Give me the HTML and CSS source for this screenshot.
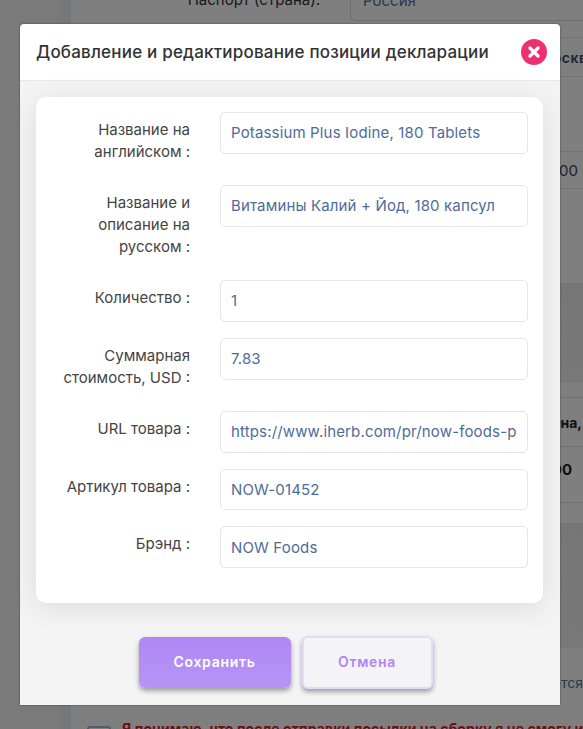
FILE: index.html
```html
<!DOCTYPE html>
<html lang="en">
<head>
    <meta charset="UTF-8">
    <meta name="viewport" content="width=device-width, initial-scale=1.0">
    <title>Позиция декларации</title>
    <link rel="stylesheet" href="styles.css">
</head>
<body>

    <div class="page">
        <div class="sidebar"></div>
        <div class="content">
            <div class="passport-row">
                <span class="passport-label">Паспорт (страна):</span>
                <span class="passport-value">Россия</span>
            </div>
            <div class="line-row city-row"><span class="city">Москва</span></div>
            <div class="blank-row"></div>
            <div class="line-row sum-row"><span class="sum">100</span></div>
            <div class="blank-row short"></div>
            <div class="band"></div>
            <div class="table-gap"></div>
            <div class="line-row head-row"><span class="head">Цена,</span></div>
            <div class="line-row price-row"><span class="price">100</span></div>
            <div class="table-gap low"></div>
            <div class="band tall"></div>
            <div class="note-row"><span class="note">оплачивается</span></div>
            <div class="agree-row">
                <span class="checkbox"></span>
                <span class="agree">Я понимаю, что после отправки посылки на сборку я не смогу изменить</span>
            </div>
        </div>
    </div>

    <div class="overlay"></div>

    <div class="modal">
        <div class="modal-header">
            <h4 class="modal-title">Добавление и редактирование позиции декларации</h4>
            <button class="close-button" aria-label="Закрыть">
                <svg width="12" height="12" viewBox="0 0 12 12"><path d="M2 2 L10 10 M10 2 L2 10" stroke="#fff" stroke-width="3.2" stroke-linecap="round"/></svg>
            </button>
        </div>
        <div class="modal-body">
            <form class="card">
                <div class="field">
                    <label class="field-label">Название на английском :</label>
                    <input class="field-input" type="text" value="Potassium Plus Iodine, 180 Tablets">
                </div>
                <div class="field">
                    <label class="field-label">Название и<br>описание на<br>русском :</label>
                    <input class="field-input" type="text" value="Витамины Калий + Йод, 180 капсул">
                </div>
                <div class="field">
                    <label class="field-label">Количество :</label>
                    <input class="field-input" type="text" value="1">
                </div>
                <div class="field">
                    <label class="field-label">Суммарная<br>стоимость, USD :</label>
                    <input class="field-input" type="text" value="7.83">
                </div>
                <div class="field">
                    <label class="field-label">URL товара :</label>
                    <input class="field-input" type="text" value="https://www.iherb.com/pr/now-foods-potassium-plus-iodine-180-tablets/1452">
                </div>
                <div class="field">
                    <label class="field-label">Артикул товара :</label>
                    <input class="field-input" type="text" value="NOW-01452">
                </div>
                <div class="field">
                    <label class="field-label">Брэнд :</label>
                    <input class="field-input" type="text" value="NOW Foods">
                </div>
            </form>
            <div class="modal-actions">
                <button class="button button-save" type="button">Сохранить</button>
                <button class="button button-cancel" type="button">Отмена</button>
            </div>
        </div>
    </div>

</body>
</html>
```

FILE: styles.css
```css
html {
    box-sizing: border-box;
}
*, *:before, *:after {
    box-sizing: inherit;
}
body {
    margin: 0;
    height: 729px;
    overflow: hidden;
    font-family: 'Inter', 'Liberation Sans', sans-serif;
    background: #fff;
    position: relative;
}

/* Page behind the dialog */
.page {
    display: flex;
    height: 729px;
    overflow: hidden;
}
.sidebar {
    width: 71px;
    flex-shrink: 0;
    background: linear-gradient(to right, #f6f6f6 0%, #f4f4f4 80%, #eaecef 100%);
}
.content {
    flex: 1;
    min-width: 0;
    background: #fff;
}
.passport-row {
    display: flex;
    gap: 30px;
    height: 47px;
    border-bottom: 1px solid #e8e8e8;
    margin-top: -9px;
    font-size: 15px;
}
.passport-label {
    width: 249px;
    flex-shrink: 0;
    text-align: right;
    color: #333;
    line-height: 18px;
}
.passport-value {
    width: 300px;
    flex-shrink: 0;
    height: 30px;
    padding: 0 12px;
    border: 1px solid #d8dde5;
    border-radius: 6px;
    color: #53709c;
    line-height: 18px;
}
.line-row {
    display: flex;
    justify-content: flex-end;
    align-items: center;
    border-bottom: 1px solid #e4e4e4;
    white-space: nowrap;
}
.city-row {
    height: 39px;
}
.city {
    font-size: 14px;
    font-weight: 600;
    letter-spacing: 0.5px;
    color: #3a4a68;
    margin-right: -13px;
}
.blank-row {
    height: 75px;
    border-bottom: 1px solid #e4e4e4;
}
.blank-row.short {
    height: 94px;
    border-bottom: 0;
}
.sum-row {
    height: 37px;
}
.sum {
    font-size: 15px;
    color: #3a4a68;
    margin-right: 5px;
}
.band {
    height: 100px;
    background: linear-gradient(to bottom, #ededed, #f2f2f2);
}
.band.tall {
    height: 125px;
}
.table-gap {
    height: 15px;
    border-bottom: 1px solid #e4e4e4;
}
.table-gap.low {
    height: 20px;
    border-bottom: 0;
}
.head-row {
    height: 49px;
}
.head {
    font-size: 14px;
    font-weight: 700;
    color: #222;
    margin-right: 1px;
}
.price-row {
    height: 56px;
    padding-bottom: 10px;
}
.price {
    font-size: 15px;
    font-weight: 700;
    color: #222;
    margin-right: 11px;
}
.note-row {
    height: 75px;
    text-align: right;
    padding-top: 24px;
}
.note {
    font-size: 14px;
    color: #53709c;
}
.agree-row {
    display: flex;
    gap: 11px;
    padding-left: 16px;
    margin-top: -3px;
    white-space: nowrap;
}
.checkbox {
    width: 24px;
    height: 24px;
    flex-shrink: 0;
    margin-top: 6px;
    border: 2px solid #a5bad2;
    border-radius: 3px;
}
.agree {
    font-size: 14px;
    font-weight: 700;
    letter-spacing: 0.1px;
    color: #d81e1e;
    line-height: 18px;
}

.overlay {
    position: absolute;
    inset: 0;
    background: rgba(0, 0, 0, 0.5);
}

/* Dialog */
.modal {
    position: absolute;
    left: 20px;
    top: 24px;
    width: 540px;
    height: 681px;
    background: #fff;
    border-radius: 4px 4px 0 0;
    box-shadow: 0 0 2px rgba(0, 0, 0, 0.5);
    overflow: hidden;
}
.modal-header {
    display: flex;
    align-items: center;
    justify-content: space-between;
    height: 57px;
    padding: 0 13px 0 16px;
    border-bottom: 1px solid #e6e8ee;
}
.modal-title {
    margin: 0;
    font-size: 17px;
    font-weight: 450;
    letter-spacing: 0.2px;
    color: #333;
    white-space: nowrap;
}
.close-button {
    display: flex;
    align-items: center;
    justify-content: center;
    width: 26px;
    height: 26px;
    padding: 0;
    border: 0;
    border-radius: 50%;
    background: #ee2f70;
    cursor: pointer;
}
.modal-body {
    height: 624px;
    padding: 16px 17px 0 16px;
    background: #f4f4f5;
}
.card {
    height: 506px;
    padding: 15px 15px 0 0;
    background: #fff;
    border-radius: 10px;
    box-shadow: 0 5px 30px rgba(0, 0, 0, 0.1);
}
.field {
    display: flex;
    gap: 30px;
    margin-bottom: 16px;
}
.field-label {
    width: 154px;
    flex-shrink: 0;
    padding: 7px 0 6px;
    font-size: 15px;
    line-height: 22px;
    text-align: right;
    color: #444;
}
.field-input {
    flex: 1;
    min-width: 0;
    height: 41.75px;
    padding: 0 10px;
    border: 1px solid #e4e6ea;
    border-radius: 5px;
    background: #fff;
    font-family: inherit;
    font-size: 15px;
    font-weight: 400;
    letter-spacing: 0.15px;
    color: #4f6c98;
}
.modal-actions {
    display: flex;
    justify-content: center;
    align-items: center;
    gap: 11px;
    margin-top: 33px;
    padding-right: 8px;
}
.button {
    padding: 0 0 2px;
    font-family: inherit;
    font-size: 14px;
    font-weight: 600;
    letter-spacing: 0.7px;
    border-radius: 6px;
    cursor: pointer;
}
.button-save {
    width: 152px;
    height: 51px;
    border: 0;
    color: #fff;
    background: linear-gradient(to bottom, #b086f6, #b595f5);
    box-shadow: 0 3px 5px rgba(0, 0, 0, 0.35);
}
.button-cancel {
    width: 131px;
    height: 53px;
    border: 2px solid #e6dafb;
    color: #b086f6;
    background: #f4f4f7;
    box-shadow: 0 3px 5px rgba(0, 0, 0, 0.35);
}
```
